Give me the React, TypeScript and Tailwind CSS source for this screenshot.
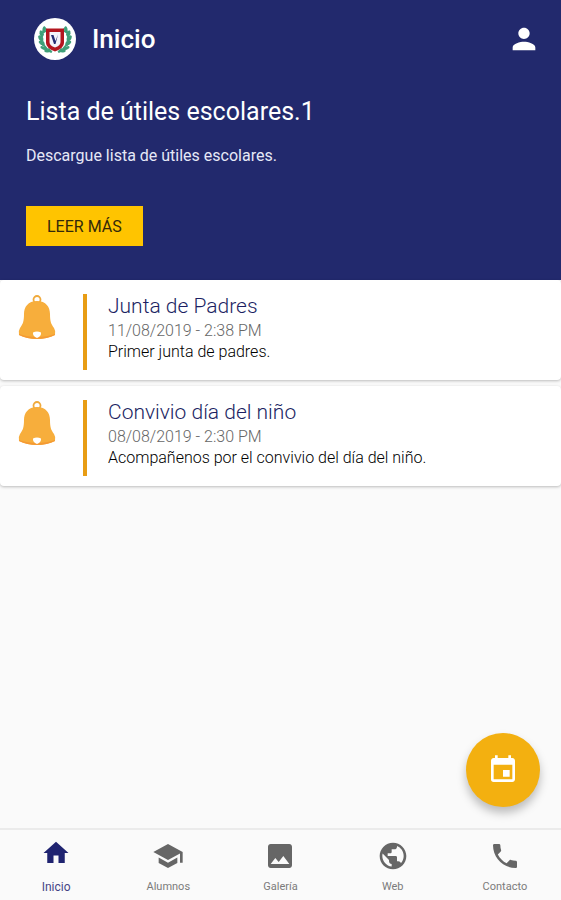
import type { ComponentType } from 'react';
import {
  MdEvent,
  MdHome,
  MdImage,
  MdPerson,
  MdPhone,
  MdPublic,
  MdSchool,
} from 'react-icons/md';

type Notice = {
  title: string;
  date: string;
  text: string;
};

type Tab = {
  label: string;
  icon: ComponentType<{ className?: string }>;
  active?: boolean;
};

const notices: Notice[] = [
  {
    title: 'Junta de Padres',
    date: '11/08/2019 - 2:38 PM',
    text: 'Primer junta de padres.',
  },
  {
    title: 'Convivio día del niño',
    date: '08/08/2019 - 2:30 PM',
    text: 'Acompañenos por el convivio del día del niño.',
  },
];

const tabs: Tab[] = [
  { label: 'Inicio', icon: MdHome, active: true },
  { label: 'Alumnos', icon: MdSchool },
  { label: 'Galería', icon: MdImage },
  { label: 'Web', icon: MdPublic },
  { label: 'Contacto', icon: MdPhone },
];

// Leaves of the left branch; the right one is the same drawing mirrored
const leaves = [
  [10, 11, 40],
  [7, 15, 20],
  [6, 20, 0],
  [7, 25, -20],
  [9, 30, -40],
  [13, 33, -60],
];

const Laurel = () => (
  <g>
    <path d="M12 10C6 16 6 29 18 34" fill="none" stroke="#4aa583" strokeWidth="2" />
    {leaves.map(([x, y, angle]) => (
      <g key={y} fill="#3f9f78" transform={`translate(${x} ${y}) rotate(${angle})`}>
        <ellipse rx="1.5" ry="2.8" transform="rotate(-25)" />
        <ellipse cx="2.4" cy="1" rx="1.3" ry="2.4" transform="rotate(25)" />
      </g>
    ))}
  </g>
);

const SchoolLogo = () => (
  <svg viewBox="0 0 42 42" className="size-[42px]" role="img" aria-label="Escudo">
    <circle cx="21" cy="21" r="21" fill="#fff" />
    <Laurel />
    <g transform="translate(42 0) scale(-1 1)">
      <Laurel />
    </g>
    <path d="M12 10.5H30V25Q30 30 21 33.5Q12 30 12 25Z" fill="#b3161f" />
    <path d="M15.5 14H26.5V24Q26.5 27.5 21 29.5Q15.5 27.5 15.5 24Z" fill="#f3f3fa" />
    <path d="M17 17L19.500 17L21.500 23L24 16.500L21.500 26H20Z" fill="#252c73" />
  </svg>
);

const Bell = () => (
  <svg viewBox="0 0 38 46" className="h-[46px] w-[38px] shrink-0" aria-hidden="true">
    <circle cx="19" cy="5.5" r="3.5" fill="none" stroke="#f0aa3c" strokeWidth="1.8" />
    <path
      d="M19 7C10 7 6 13 6 20C6 27 5 30 2 34Q0 37 1 41Q9 45 19 45Q29 45 37 41Q38 37 36 34C33 30 32 27 32 20C32 13 28 7 19 7Z"
      fill="#f7ae3c"
    />
    <path d="M1 40V41Q9 45 19 45Q29 45 37 41V40Q29 43 19 43Q9 43 1 40Z" fill="#f59a33" />
    <path d="M15 38.5Q19 36.5 23 38.5Q23.5 42 19 44Q14.5 42 15 38.5Z" fill="#fff" />
  </svg>
);

const NoticeCard = ({ title, date, text }: Notice) => (
  <article className="flex h-[100px] items-start rounded-sm bg-white pl-[18px] shadow-[0_1px_3px_rgba(0,0,0,0.25)]">
    <div className="pt-3.5">
      <Bell />
    </div>
    <div className="mt-3.5 ml-[27px] h-[76px] w-1 shrink-0 bg-[#e89d14]" />
    <div className="ml-[21px] pt-3">
      <h2 className="text-[21px] leading-7 font-light text-[#1c1f63]">{title}</h2>
      <p className="text-base leading-[21px] font-light text-[#666666]">{date}</p>
      <p className="text-base leading-[22px] font-light text-black">{text}</p>
    </div>
  </article>
);

const App = () => {
  return (
    <div className="flex min-h-screen w-full flex-col bg-[#fafafa] font-['Roboto',sans-serif]">
      {/* App bar */}
      <header className="flex h-[78px] items-center bg-[#22296d] pr-5 pl-[34px] text-white">
        <SchoolLogo />
        <h1 className="ml-4 text-[26px] leading-8 font-medium">Inicio</h1>
        <button type="button" aria-label="Perfil" className="ml-auto">
          <MdPerson className="size-[34px]" />
        </button>
      </header>

      {/* Featured announcement */}
      <section className="flex flex-col items-start bg-[#22296d] px-[26px] pt-[18px] pb-[34px] text-white">
        <h2 className="text-[25px] leading-8">Lista de útiles escolares.1</h2>
        <p className="mt-[18px] text-base leading-5 text-[#e6e8f7]">
          Descargue lista de útiles escolares.
        </p>
        <button
          type="button"
          className="mt-10 bg-[#ffc400] px-[21px] pt-[11px] pb-[9px] text-base leading-5 text-[#33290a]"
        >
          LEER MÁS
        </button>
      </section>

      {/* Notices */}
      <main className="flex flex-1 flex-col gap-1.5">
        {notices.map((notice) => (
          <NoticeCard key={notice.title} {...notice} />
        ))}
        <button
          type="button"
          aria-label="Calendario"
          className="mt-auto mr-[21px] mb-[21px] flex size-[74px] items-center justify-center self-end rounded-full bg-[#f3b010] text-white shadow-[0_6px_10px_rgba(0,0,0,0.25)]"
        >
          <MdEvent className="size-8" />
        </button>
      </main>

      {/* Bottom navigation */}
      <nav className="grid h-[72px] grid-cols-5 border-t-2 border-[#ebebeb] bg-[#fafafa]">
        {tabs.map(({ label, icon: Icon, active }) => (
          <a
            key={label}
            href="#"
            aria-current={active ? 'page' : undefined}
            className={`flex flex-col items-center justify-between pb-[5px] ${
              active ? 'pt-2 text-xs text-[#1f2370]' : 'pt-2.5 text-[11px] text-[#666666]'
            }`}
          >
            <Icon className={active ? 'size-[30px]' : 'size-8'} />
            <span className="leading-4 opacity-85">{label}</span>
          </a>
        ))}
      </nav>
    </div>
  );
};

export default App;
